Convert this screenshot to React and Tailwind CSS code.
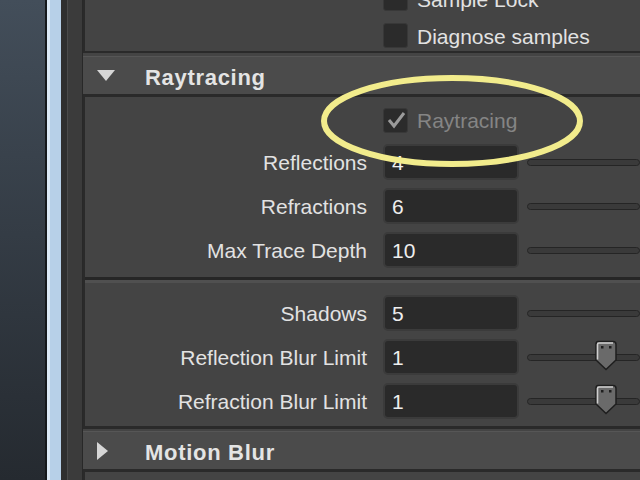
import React from "react";

const font = { fontFamily: '"Liberation Sans", Arial, sans-serif' };

function Checkbox({ checked, disabled }) {
    return (
        <div className="w-[25px] h-[25px] rounded-[3px] bg-[#2b2b2b] border border-[#383838] flex items-center justify-center">
            {checked && (
                <svg width="22" height="22" viewBox="0 0 22 22">
                    <polyline
                        points="4,11 9,17 19,4"
                        fill="none"
                        stroke={disabled ? "#9a9a9a" : "#e0e0e0"}
                        strokeWidth="3"
                    />
                </svg>
            )}
        </div>
    );
}

function CheckRow({ label, checked, disabled, h = "h-[37px]" }) {
    return (
        <div className={`flex items-center ${h} pl-[298px] gap-[9px]`}>
            <Checkbox checked={checked} disabled={disabled} />
            <span className={`text-[21px] pt-[2px] ${disabled ? "text-[#858585]" : "text-[#e2e2e2]"}`}>{label}</span>
        </div>
    );
}

function Thumb() {
    return (
        <svg width="24" height="31" viewBox="0 0 24 31" className="absolute left-[66px] top-[-15px]">
            <path d="M4 1.5 H19 Q22 1.5 22 4.5 V20 L12 29.5 L2 20 V4.5 Q2 1.5 4 1.5 Z" fill="#6a6a6a" stroke="#1e1e1e" strokeWidth="1.5" />
            <path d="M3.5 19.5 V4.5 Q3.5 3 5 3 H19" fill="none" stroke="#cfcfcf" strokeWidth="1.6" />
            <rect x="7" y="6" width="2.5" height="2.5" fill="#1e1e1e" />
            <rect x="15" y="6" width="2.5" height="2.5" fill="#1e1e1e" />
        </svg>
    );
}

function FieldRow({ label, value, thumb }) {
    return (
        <div className="flex items-center h-[44px]">
            <div className="w-[282px] text-right text-[21px] text-[#e2e2e2] pt-[2px]">{label}</div>
            <div className="ml-[16px] w-[136px] h-[36px] rounded-[5px] bg-[#2a2a2a] border-2 border-[#3b3b3b] flex items-center pl-[7px] pt-[2px] text-[21px] text-[#eeeeee]">
                {value}
            </div>
            <div className="relative ml-[8px] flex-1 h-[7px] rounded-full bg-[#3a3a3a] border border-[#252525]">
                {thumb && <Thumb />}
            </div>
        </div>
    );
}

function Header({ title, open }) {
    return (
        <div className="h-[38px] shrink-0 bg-[#4b4b4b] border-t border-[#565656] flex items-center">
            <div className="w-[62px] pl-[14px] flex items-center">
                {open ? (
                    <svg width="18" height="12" viewBox="0 0 18 12">
                        <polygon points="0,0 18,0 9,11" fill="#d6d6d6" />
                    </svg>
                ) : (
                    <svg width="12" height="18" viewBox="0 0 12 18">
                        <polygon points="0,0 11,9 0,18" fill="#d6d6d6" />
                    </svg>
                )}
            </div>
            <span className="text-[22px] pt-[3px] font-bold text-[#e4e4e4] tracking-[0.7px]">{title}</span>
        </div>
    );
}

export default function App() {
    return (
        <div className="relative w-[640px] h-[480px] overflow-hidden flex bg-[#444444]" style={font}>
            {/* left side panels */}
            <div className="w-[45px] bg-gradient-to-b from-[#434e5a] to-[#252a30]" />
            <div className="w-[2px] bg-[#15181b]" />
            <div className="w-[14px] bg-[#b7d0e8] border-l-[3px] border-[#dbe9f6]" />
            <div className="w-[6px] bg-[#2f2f2f]" />
            <div className="w-[1px] bg-[#4a4a4a]" />
            <div className="w-[14px] bg-[#3b3b3b]" />
            <div className="w-[1px] bg-[#282828]" />

            {/* attribute editor */}
            <div className="flex-1 flex flex-col min-w-0">
                <div className="h-[53px] shrink-0 overflow-hidden border-l-2 border-b-2 border-[#2a2a2a] bg-[#444444]">
                    <div className="mt-[-20px]">
                        <CheckRow label="Sample Lock" />
                        <CheckRow label="Diagnose samples" />
                    </div>
                </div>
                <div className="h-[3px] shrink-0" />
                <Header title="Raytracing" open />
                <div className="shrink-0 border-t-[3px] border-l-2 border-b-[3px] border-[#2a2a2a] bg-[#444444] pt-[3px]">
                    <CheckRow label="Raytracing" checked disabled h="h-[40px]" />
                    <FieldRow label="Reflections" value="4" />
                    <FieldRow label="Refractions" value="6" />
                    <FieldRow label="Max Trace Depth" value="10" />
                    <div className="mt-[5px] h-[3px] bg-[#262626]" />
                    <div className="h-[3px] bg-[#505050]" />
                    <div className="pt-[8px] pb-[3px]">
                        <FieldRow label="Shadows" value="5" />
                        <FieldRow label="Reflection Blur Limit" value="1" thumb />
                        <FieldRow label="Refraction Blur Limit" value="1" thumb />
                    </div>
                </div>
                <div className="h-[2px] shrink-0" />
                <Header title="Motion Blur" />
                <div className="flex-1 border-t-[3px] border-l-2 border-[#2a2a2a] bg-[#444444]" />
            </div>

            {/* highlight ellipse */}
            <svg width="640" height="480" className="absolute inset-0 pointer-events-none">
                <ellipse cx="452" cy="121" rx="128" ry="43" fill="none" stroke="#f2ec8c" strokeWidth="6" />
            </svg>
        </div>
    );
}
